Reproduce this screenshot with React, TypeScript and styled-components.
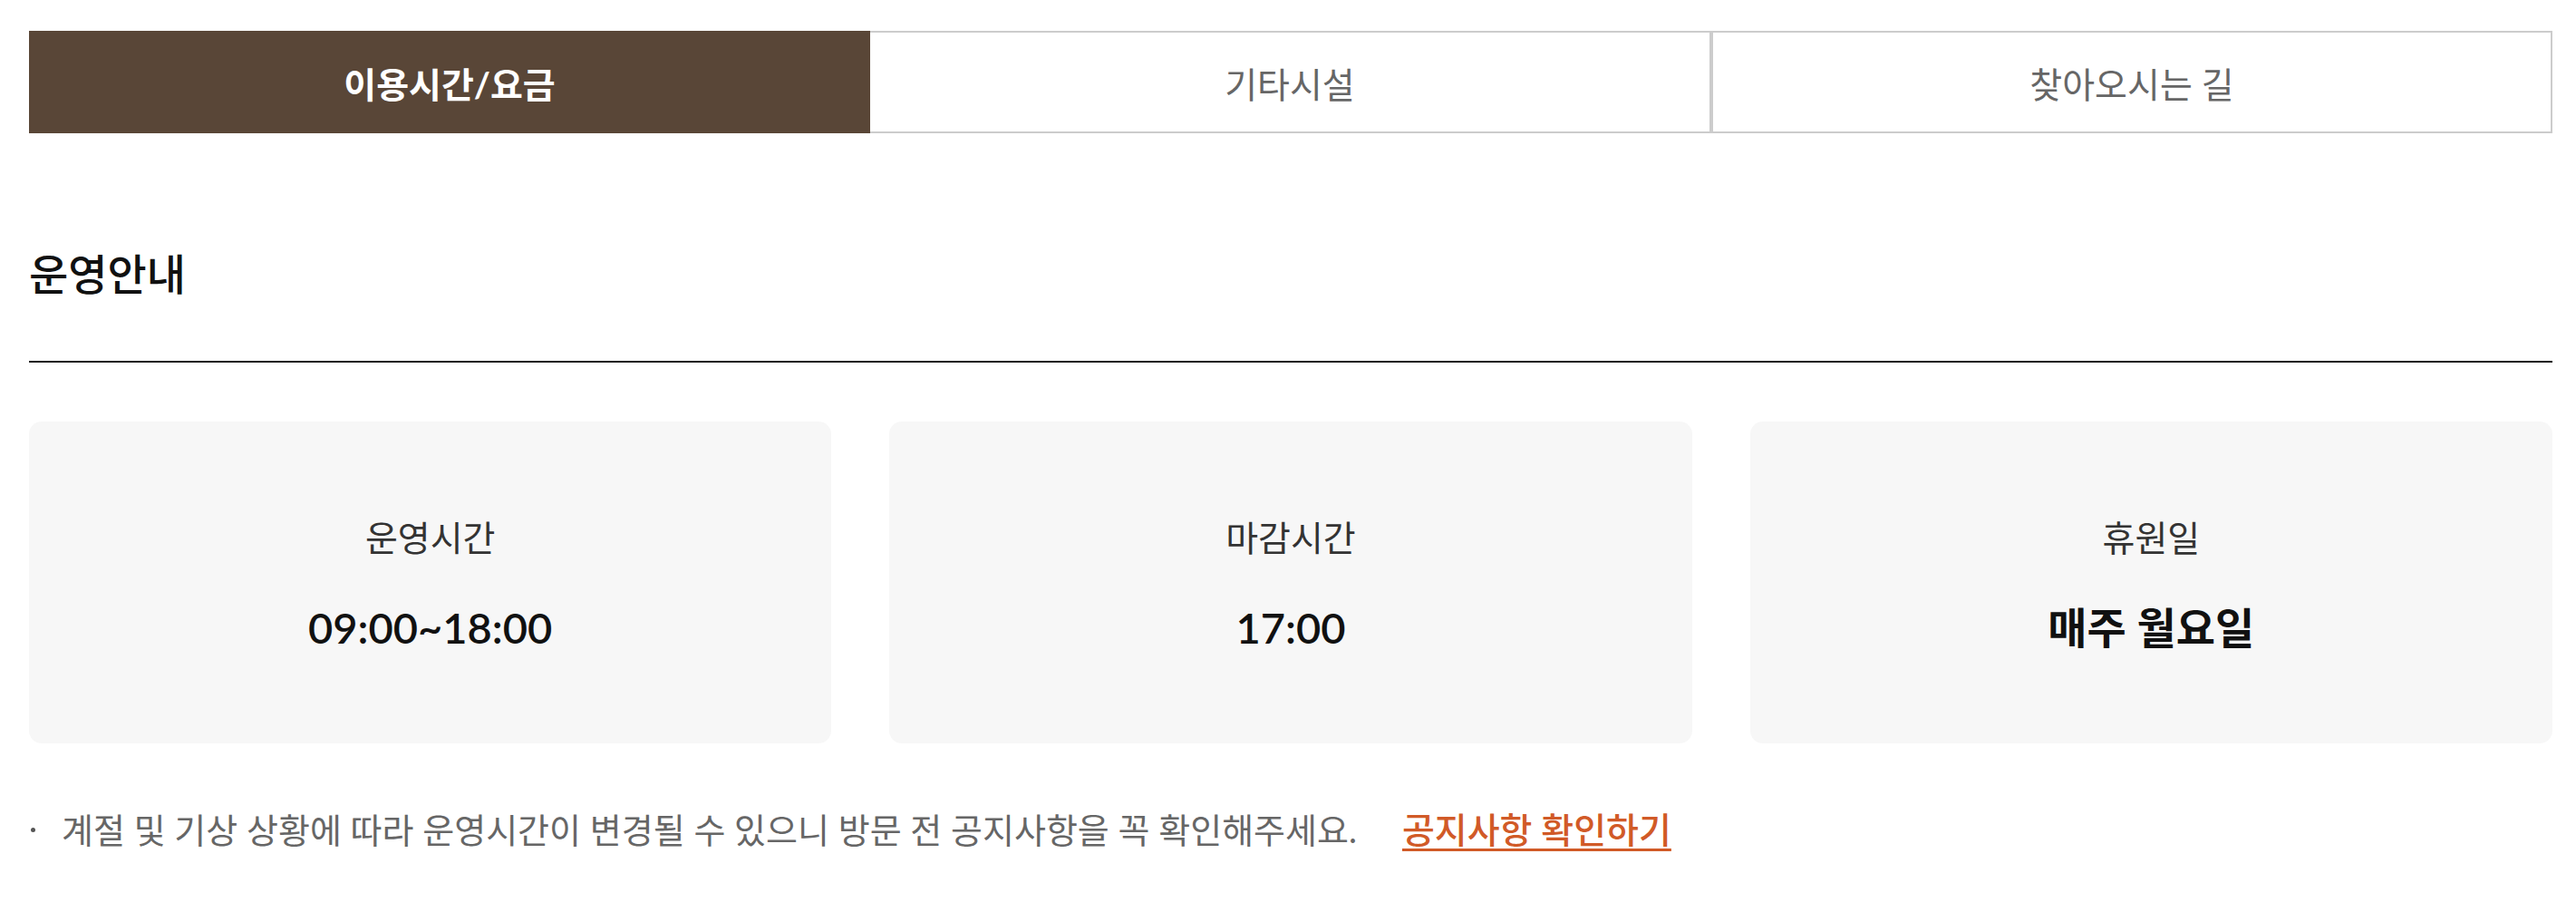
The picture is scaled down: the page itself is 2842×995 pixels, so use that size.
import styled, { createGlobalStyle } from 'styled-components';

const GlobalStyle = createGlobalStyle`
  * {
    box-sizing: border-box;
  }
  body {
    margin: 0;
    background: #ffffff;
    font-family: Lato, "Noto Sans CJK KR", sans-serif;
    color: #111111;
  }
`;

const Page = styled.div`
  padding: 34px 26px 40px 32px;
`;

const Tabs = styled.ul`
  display: grid;
  grid-template-columns: repeat(3, 1fr);
  margin: 0;
  padding: 0;
  list-style: none;
`;

const Tab = styled.li<{ $active?: boolean }>`
  height: 113px;
  display: flex;
  align-items: center;
  justify-content: center;
  font-size: 39px;
  font-weight: ${(p) => (p.$active ? 700 : 400)};
  color: ${(p) => (p.$active ? '#ffffff' : '#666666')};
  background-color: ${(p) => (p.$active ? '#594637' : '#ffffff')};
  border: 2px solid ${(p) => (p.$active ? '#594637' : '#cccccc')};
  & + & {
    border-left: none;
  }
  &:last-child {
    border-left: 2px solid #cccccc;
  }
  cursor: pointer;
`;

const SectionTitle = styled.h2`
  margin: 125px 0 0;
  padding-bottom: 66px;
  font-size: 47px;
  line-height: 60px;
  font-weight: 500;
  color: #111111;
  border-bottom: 2px solid #1a1a1a;
`;

const Cards = styled.div`
  display: grid;
  grid-template-columns: repeat(3, 1fr);
  gap: 64px;
  margin-top: 65px;
`;

const Card = styled.div`
  height: 355px;
  background-color: #f7f7f7;
  border-radius: 14px;
  display: flex;
  flex-direction: column;
  align-items: center;
  justify-content: center;
  gap: 44px;
  padding-top: 4px;
`;

const Label = styled.p`
  margin: 0;
  font-size: 39px;
  line-height: 50px;
  color: #333333;
`;

const Value = styled.p`
  margin: 0;
  font-size: 47px;
  line-height: 60px;
  font-weight: 600;
  color: #111111;
`;

const Notice = styled.div`
  display: flex;
  align-items: center;
  margin-top: 70px;
  font-size: 38px;
  line-height: 50px;
  color: #666666;
`;

const Dot = styled.span`
  width: 5px;
  height: 5px;
  border-radius: 50%;
  background-color: #555555;
  margin: 0 29px 0 2px;
  flex-shrink: 0;
`;

const NoticeLink = styled.a`
  margin-left: 50px;
  font-size: 39px;
  font-weight: 500;
  color: #d15a27;
  text-decoration: underline;
  text-decoration-thickness: 3px;
  text-underline-offset: 6px;
  cursor: pointer;
`;

const tabs = ['이용시간/요금', '기타시설', '찾아오시는 길'];

const info = [
  { label: '운영시간', value: '09:00~18:00' },
  { label: '마감시간', value: '17:00' },
  { label: '휴원일', value: '매주 월요일' },
];

const App = () => {
  return (
    <>
      <GlobalStyle />
      <Page>
        <Tabs>
          {tabs.map((t, i) => (
            <Tab key={t} $active={i === 0}>
              {t}
            </Tab>
          ))}
        </Tabs>
        <SectionTitle>운영안내</SectionTitle>
        <Cards>
          {info.map((item) => (
            <Card key={item.label}>
              <Label>{item.label}</Label>
              <Value>{item.value}</Value>
            </Card>
          ))}
        </Cards>
        <Notice>
          <Dot />
          계절 및 기상 상황에 따라 운영시간이 변경될 수 있으니 방문 전 공지사항을 꼭 확인해주세요.
          <NoticeLink>공지사항 확인하기</NoticeLink>
        </Notice>
      </Page>
    </>
  );
};

export default App;
